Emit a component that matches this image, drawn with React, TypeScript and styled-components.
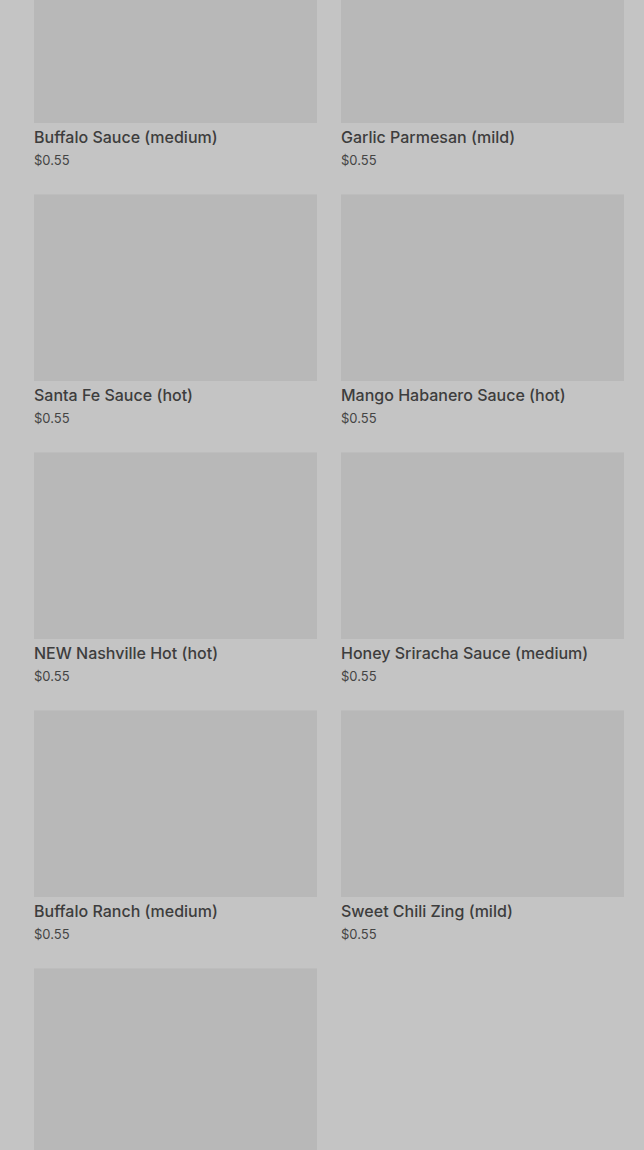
import React from "react";
import styled, { createGlobalStyle } from "styled-components";

const GlobalStyle = createGlobalStyle`
  html, body {
    margin: 0;
    padding: 0;
    background: #c4c4c4;
    height: 1150px;
    overflow: hidden;
  }
  body {
    font-family: "Inter", "Roboto", sans-serif;
    color: #3c3c3c;
  }
`;

const Page = styled.div`
  padding: 0 20px 0 34px;
`;

const Grid = styled.ul`
  list-style: none;
  margin: -64px 0 0;
  padding: 0;
  display: grid;
  grid-template-columns: 283px 283px;
  column-gap: 24px;
  row-gap: 24px;
`;

const Card = styled.li`
  display: flex;
  flex-direction: column;
`;

const Thumb = styled.div`
  height: 187px;
  background: #b8b8b8;
  box-shadow: inset 0 1px 0 #bdbdbd;
`;

const Title = styled.h3`
  margin: 3px 0 0;
  font-size: 16px;
  line-height: 22px;
  font-weight: 500;
  color: #3d3d3d;
`;

const Price = styled.span`
  margin-top: 2px;
  font-size: 13px;
  line-height: 20px;
  color: #444;
`;

const sauces = [
  "Buffalo Sauce (medium)",
  "Garlic Parmesan (mild)",
  "Santa Fe Sauce (hot)",
  "Mango Habanero Sauce (hot)",
  "NEW Nashville Hot (hot)",
  "Honey Sriracha Sauce (medium)",
  "Buffalo Ranch (medium)",
  "Sweet Chili Zing (mild)",
  "",
];

export default function App() {
  return (
    <Page>
      <GlobalStyle />
      <Grid>
        {sauces.map((name, i) => (
          <Card key={i}>
            <Thumb />
            {name && (
              <>
                <Title>{name}</Title>
                <Price>$0.55</Price>
              </>
            )}
          </Card>
        ))}
      </Grid>
    </Page>
  );
}
